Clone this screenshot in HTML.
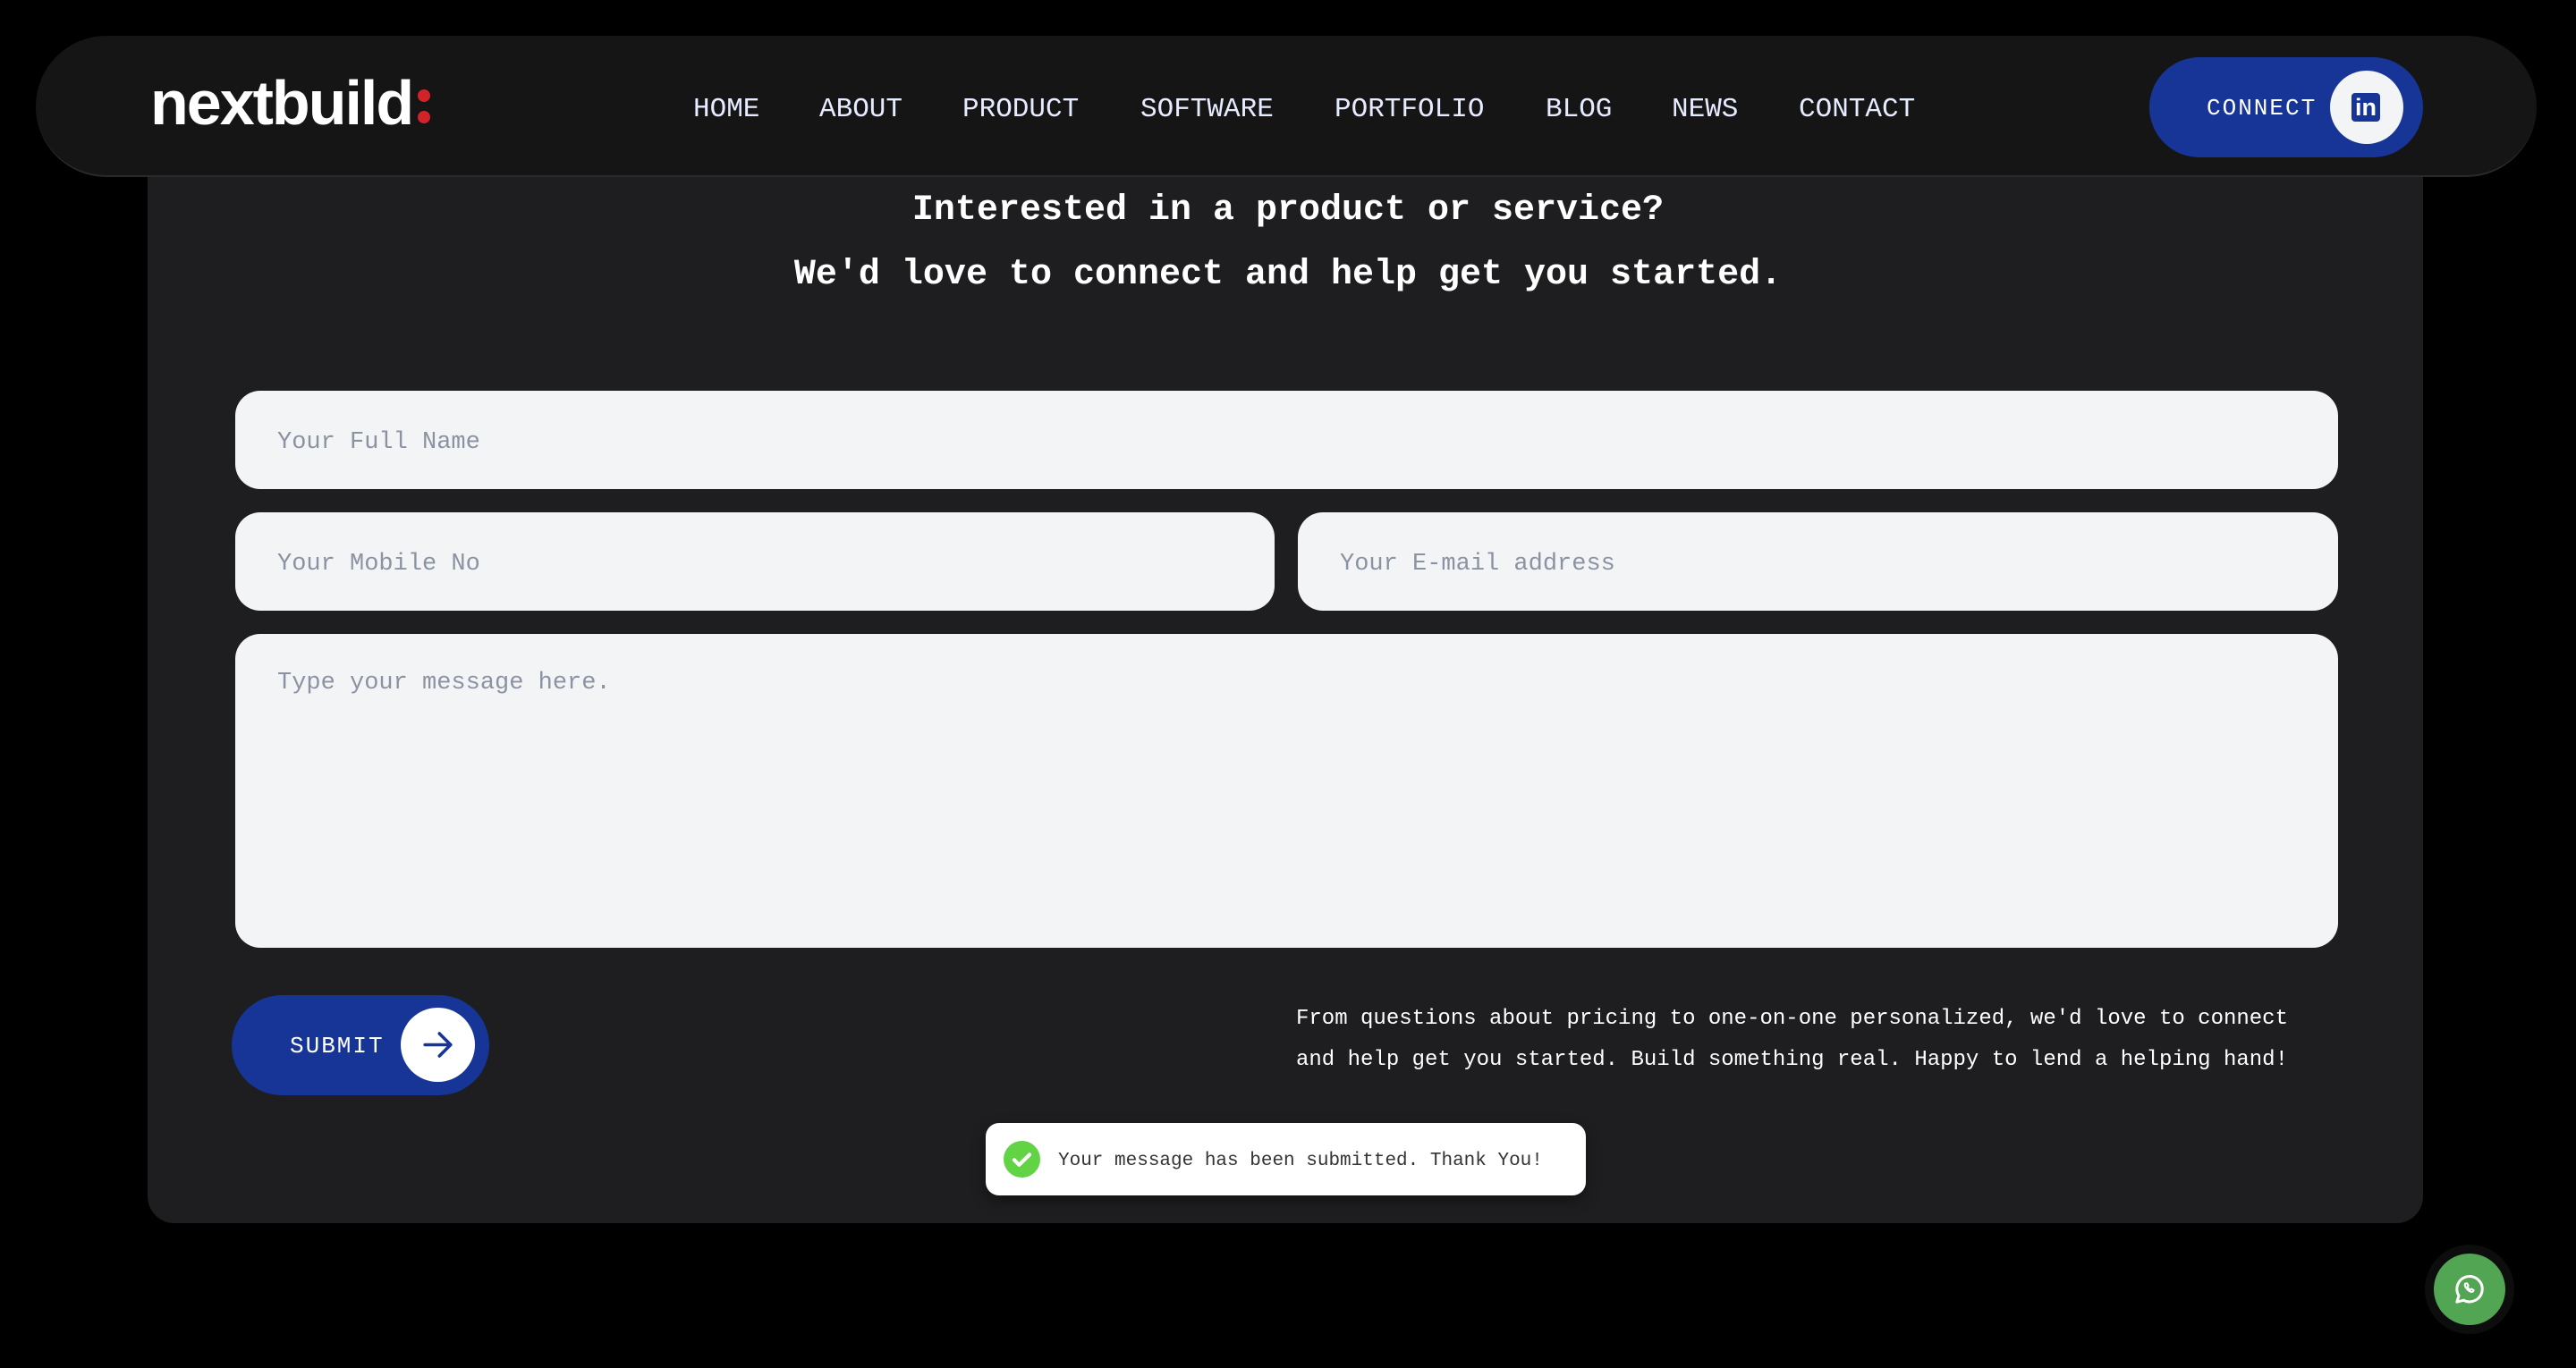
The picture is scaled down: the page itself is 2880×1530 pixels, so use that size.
<!DOCTYPE html>
<html><head><meta charset="utf-8"><style>
*{box-sizing:border-box;margin:0;padding:0}
html,body{width:2880px;height:1530px;background:#000;overflow:hidden;font-family:"Liberation Mono",monospace;color:#fff}
.card{position:absolute;left:165px;top:150px;width:2544px;height:1218px;background:#1e1e20;border-radius:30px}
.header{position:absolute;left:40px;top:40px;width:2796px;height:158px;background:#151515;border-radius:80px;border-bottom:2px solid #2a2a2a}
.logo{position:absolute;left:168px;top:80px;font-family:"Liberation Sans",sans-serif;font-weight:bold;font-size:70px;letter-spacing:-2px;color:#fff;line-height:1}
.dot{position:absolute;width:14px;height:14px;border-radius:50%;background:#d2232a}
.nav{position:absolute;top:104px;font-size:31px;color:#e6ebff;line-height:38px}
.btn{position:absolute;background:#163596;border-radius:60px}
.circ{position:absolute;background:#f3f4f6;border-radius:50%}
h2{position:absolute;left:0;width:2880px;text-align:center;font-size:40px;font-weight:bold;line-height:72px;top:200px}
.in{position:absolute;background:#f3f4f6;border-radius:28px;color:#8b93a3;font-size:27px;padding-left:47px;padding-top:6px}
.p{position:absolute;left:1449px;top:1117px;font-size:24px;line-height:46px;color:#fff}
.toast{position:absolute;left:1102px;top:1256px;width:671px;height:81px;background:#fff;border-radius:15px;box-shadow:0 6px 16px rgba(0,0,0,.4)}
</style></head><body>
<div class="card"></div>
<div class="header"></div>
<div class="logo">nextbuild</div>
<div class="dot" style="left:467px;top:100px"></div>
<div class="dot" style="left:467px;top:124px"></div>
<div class="nav" style="left:775px">HOME</div>
<div class="nav" style="left:916px">ABOUT</div>
<div class="nav" style="left:1076px">PRODUCT</div>
<div class="nav" style="left:1275px">SOFTWARE</div>
<div class="nav" style="left:1492px">PORTFOLIO</div>
<div class="nav" style="left:1728px">BLOG</div>
<div class="nav" style="left:1869px">NEWS</div>
<div class="nav" style="left:2011px">CONTACT</div>
<div class="btn" style="left:2403px;top:64px;width:306px;height:112px"></div>
<div style="position:absolute;left:2467px;top:105px;font-size:26px;letter-spacing:2px;line-height:32px">CONNECT</div>
<div class="circ" style="left:2605px;top:79px;width:82px;height:82px"></div>
<div style="position:absolute;left:2629px;top:104px;width:32px;height:32px;background:#163596;border-radius:4px;color:#fff;font-family:'Liberation Sans',sans-serif;font-weight:bold;font-size:27px;line-height:32px;text-align:center">in</div>
<h2>Interested in a product or service?<br>We'd love to connect and help get you started.</h2>
<div class="in" style="left:263px;top:437px;width:2351px;height:110px;line-height:104px">Your Full Name</div>
<div class="in" style="left:263px;top:573px;width:1162px;height:110px;line-height:104px">Your Mobile No</div>
<div class="in" style="left:1451px;top:573px;width:1163px;height:110px;line-height:104px">Your E-mail address</div>
<div class="in" style="left:263px;top:709px;width:2351px;height:351px;padding-top:40px;line-height:30px">Type your message here.</div>
<div class="btn" style="left:259px;top:1113px;width:288px;height:112px"></div>
<div style="position:absolute;left:324px;top:1154px;font-size:26px;letter-spacing:2px;line-height:32px">SUBMIT</div>
<div class="circ" style="left:448px;top:1127px;width:83px;height:83px;background:#fff"></div>
<svg style="position:absolute;left:468px;top:1147px" width="43" height="43" viewBox="0 0 24 24" fill="none" stroke="#163596" stroke-width="2" stroke-linecap="round" stroke-linejoin="round"><path d="M4 12h15M13 5l7 7-7 7"/></svg>
<div class="p">From questions about pricing to one-on-one personalized, we'd love to connect<br>and help get you started. Build something real. Happy to lend a helping hand!</div>
<div class="toast"></div>
<svg style="position:absolute;left:1122px;top:1276px" width="41" height="41" viewBox="0 0 24 24"><circle cx="12" cy="12" r="12" fill="#61d345"/><path d="M7 12.5l3.2 3.2L17 9" fill="none" stroke="#fff" stroke-width="2.4" stroke-linecap="round" stroke-linejoin="round"/></svg>
<div style="position:absolute;left:1183px;top:1285px;font-size:21px;line-height:28px;color:#333">Your message has been submitted. Thank You!</div>
<div style="position:absolute;left:2711px;top:1392px;width:100px;height:100px;border-radius:50%;background:#0d0d0d"></div>
<div style="position:absolute;left:2721px;top:1402px;width:80px;height:80px;border-radius:50%;background:#52a552"></div>
<svg style="position:absolute;left:2741px;top:1422px" width="40" height="40" viewBox="0 0 24 24" fill="none" stroke="#fff" stroke-width="1.8" stroke-linejoin="round"><path d="M3.5 20.5l1.3-4.2A8.5 8.5 0 1 1 8 19.3z"/><path d="M9 8.2c-.4.8 0 2.3 1.4 3.8 1.5 1.5 3 2 3.8 1.6l.6-1-1.5-.9-.7.6c-.8-.3-1.7-1.2-2-2l.6-.7-.8-1.6z" stroke-width="1.2"/></svg>
</body></html>
